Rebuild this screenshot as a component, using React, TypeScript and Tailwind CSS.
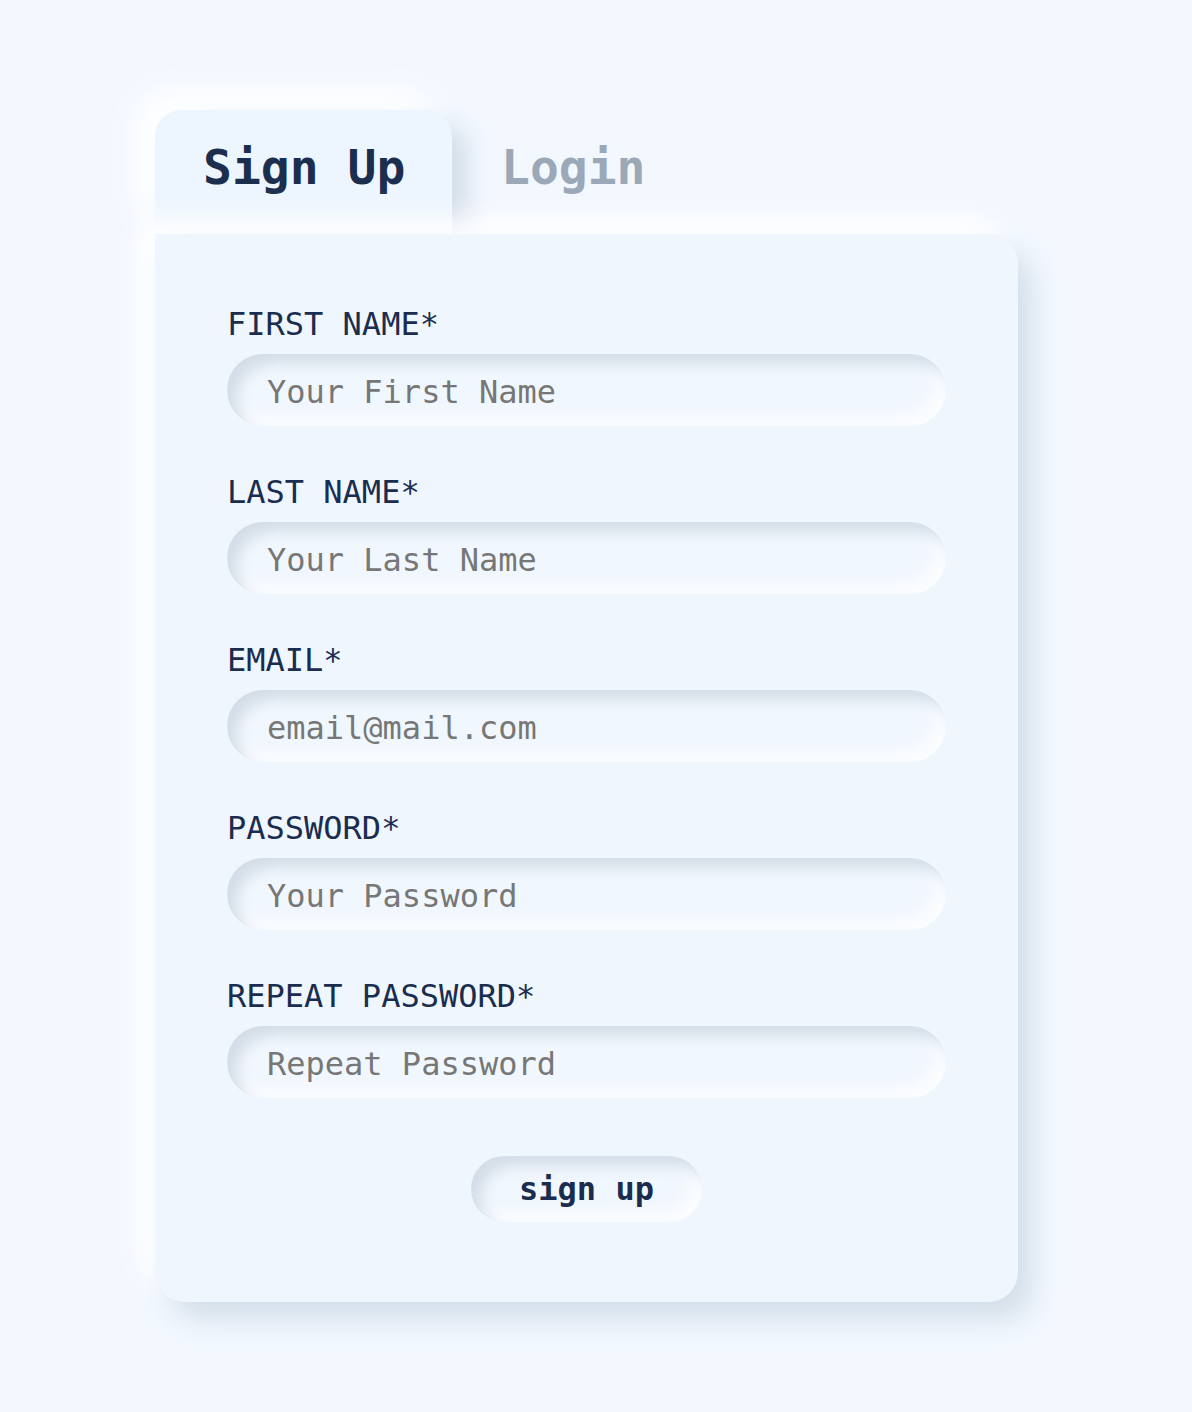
const fields = [
  { label: "FIRST NAME*", placeholder: "Your First Name", type: "text" },
  { label: "LAST NAME*", placeholder: "Your Last Name", type: "text" },
  { label: "EMAIL*", placeholder: "email@mail.com", type: "email" },
  { label: "PASSWORD*", placeholder: "Your Password", type: "password" },
  { label: "REPEAT PASSWORD*", placeholder: "Repeat Password", type: "password" },
];

const App = () => {
  return (
    <section className="min-h-screen bg-[#f3f8ff] pt-[110px] pl-[155px] font-['DejaVu_Sans_Mono',monospace]">
      <div className="w-[863px]">
        <div className="flex items-start">
          <div className="w-[297px] h-[124px] rounded-t-[26px] bg-[#edf5fe] pt-[33px] pl-[48px] shadow-[16px_14px_24px_#d3deea,-18px_-18px_36px_#ffffff]">
            <span className="text-[48px] leading-[48px] font-bold text-[#1c2e4d]">Sign Up</span>
          </div>
          <div className="pt-[33px] pl-[49px]">
            <span className="text-[48px] leading-[48px] font-bold text-[#9ba8b8]">Login</span>
          </div>
        </div>
        <div className="relative rounded-[30px] rounded-tl-none bg-[#eff6fe] px-[72px] pt-[70px] pb-[80px] shadow-[15px_18px_28px_#d4dfea,-15px_-15px_28px_#ffffff]">
          <form className="flex flex-col gap-[46px]">
            {fields.map((f) => (
              <div key={f.label} className="flex flex-col gap-[10px]">
                <label className="text-[32px] leading-[40px] text-[#1a2d4e]">{f.label}</label>
                <input
                  type={f.type}
                  placeholder={f.placeholder}
                  className="h-[72px] w-full rounded-full bg-[#f1f7fe] pt-1 pl-[40px] pr-6 text-[32px] text-[#1a2d4e] outline-none placeholder:text-[#777777] shadow-[inset_10px_10px_14px_#d4dde8,inset_-10px_-10px_14px_#fbfdff]"
                />
              </div>
            ))}
          </form>
          <div className="flex justify-center mt-[58px]">
            <button className="h-[66px] w-[231px] rounded-full bg-[#f1f7fe] text-[32px] font-bold text-[#1a2d4e] shadow-[inset_10px_10px_14px_#d4dde8,inset_-10px_-10px_14px_#fbfdff]">
              sign up
            </button>
          </div>
        </div>
      </div>
    </section>
  ) as JSX.Element;
};

export default App;
